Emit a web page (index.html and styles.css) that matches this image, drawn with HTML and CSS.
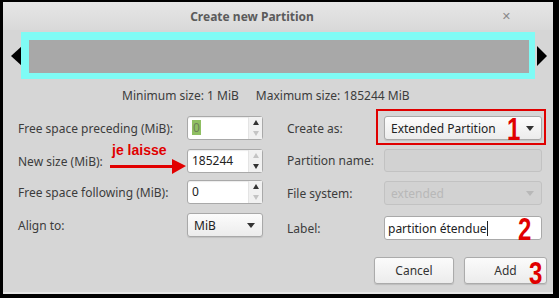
FILE: index.html
```html
<!doctype html>
<html lang="fr">
<head>
	<meta charset="UTF-8">
	<title>Create new Partition</title>
	<link rel="stylesheet" href="styles.css">
</head>
<body>
	<div class="window">
		<div class="titlebar">
			<span class="title">Create new Partition</span>
			<span class="close">&#x2715;</span>
		</div>

		<div class="partbar">
			<span class="arrow left"></span>
			<div class="cyan"><div class="gray"></div></div>
			<span class="arrow right"></span>
		</div>

		<div class="sizes">
			<span>Minimum size: 1 MiB</span>
			<span>Maximum size: 185244 MiB</span>
		</div>

		<div class="form">
			<div class="col col_left">
				<div class="row r1">
					<label>Free space preceding (MiB):</label>
					<div class="spin"><span class="val"><span class="sel">0</span></span><span class="btns"><i class="up"></i><i class="down off"></i></span></div>
				</div>
				<div class="row r2">
					<label>New size (MiB):</label>
					<div class="spin"><span class="val">185244</span><span class="btns"><i class="up off"></i><i class="down"></i></span></div>
				</div>
				<div class="row r3">
					<label>Free space following (MiB):</label>
					<div class="spin"><span class="val">0</span><span class="btns"><i class="up"></i><i class="down off"></i></span></div>
				</div>
				<div class="row r4">
					<label>Align to:</label>
					<div class="combo small"><span>MiB</span><i class="drop"></i></div>
				</div>
				<div class="note">je laisse</div>
				<div class="redarrow"></div>
			</div>

			<div class="col col_right">
				<div class="row q1">
					<label>Create as:</label>
					<div class="combo wide"><span>Extended Partition</span><i class="drop"></i></div>
				</div>
				<div class="row q2">
					<label>Partition name:</label>
					<div class="field off"></div>
				</div>
				<div class="row q3">
					<label>File system:</label>
					<div class="combo wide off"><span>extended</span><i class="drop"></i></div>
				</div>
				<div class="row q4">
					<label>Label:</label>
					<div class="field"><span>partition étendue</span><b class="caret"></b></div>
				</div>
				<div class="buttons">
					<button>Cancel</button>
					<button>Add</button>
				</div>
				<div class="redbox"></div>
				<span class="num n1">1</span>
				<span class="num n2">2</span>
				<span class="num n3">3</span>
			</div>
		</div>
	</div>
</body>
</html>
```

FILE: styles.css
```css
body{margin:0;
     background:#000;
     font-family:"Noto Sans","Open Sans","DejaVu Sans",sans-serif;
     font-size:12px;
     color:#3c3c3c;}

.window{width:550px;
        height:292px;
        margin:2px 0 0 3px;
        background:#d6d6d6;
        position:relative;
        box-sizing:border-box;
        border-bottom:2px solid #e6e6e6;}

.titlebar{height:28px;
          display:flex;
          align-items:center;
          justify-content:center;
          background:linear-gradient(#e6e6e6,#d9d9d9);
          position:relative;}
.title{font-weight:bold;
       color:#5b5b5b;
       margin-left:-52px;}
.close{position:absolute;
       right:42px;
       top:6px;
       font-size:11px;
       color:#8a8a8a;
       font-weight:bold;}

.partbar{display:flex;
         align-items:center;
         height:47px;
         margin-top:2px;
         padding:0 6px 0 8px;}
.cyan{flex:1;
      height:47px;
      margin:0 2px 0 -1px;
      background:#7ffbf5;
      box-sizing:border-box;
      padding:8px 6px 6px 8px;}
.gray{height:100%;
      background:#a8a8a8;}
.arrow{width:0;height:0;
       border-top:10px solid transparent;
       border-bottom:10px solid transparent;}
.arrow.left{border-right:11px solid #000;}
.arrow.right{border-left:10px solid #000;}

.sizes{display:flex;
       gap:17px;
       padding-left:119px;
       margin-top:8px;
       height:18px;
       line-height:18px;}

.form{display:flex;
      margin-top:11px;}
.col{position:relative;}
.col_left{width:266px;
          padding-left:15px;
          box-sizing:border-box;}
.col_right{flex:1;
           padding-left:18px;}

.row{display:flex;
     align-items:center;
     justify-content:space-between;}
.col_left .row{width:245px;}
.col_right .row{width:255px;}
.r2{margin-top:9px;}
.r3{margin-top:7px;}
.r4{margin-top:9px;}
.q2{margin-top:9px;}
.q3{margin-top:9px;}
.q4{margin-top:11px;}

.spin{width:76px;
      height:24px;
      box-sizing:border-box;
      border:1px solid #a9a9a9;
      border-radius:3px;
      background:#fff;
      display:flex;
      box-shadow:inset 0 1px 1px rgba(0,0,0,0.08);}
.val{flex:1;
     padding-left:4px;
     line-height:22px;
     color:#222;}
.sel{background:#8fbf62;
     color:#6d7f5a;
     padding:0 1px;
     display:inline-block;
     line-height:15px;}
.btns{width:13px;
      display:flex;
      flex-direction:column;
      justify-content:space-around;
      align-items:center;
      border-left:1px solid #e4e4e4;
      background:#f1f1f1;}
.btns i{width:0;height:0;
        border-left:3px solid transparent;
        border-right:3px solid transparent;}
.up{border-bottom:5px solid #333;}
.down{border-top:5px solid #333;}
.up.off{border-bottom-color:#c4c4c4;}
.down.off{border-top-color:#c4c4c4;}

.combo{height:24px;
       box-sizing:border-box;
       border:1px solid #a9a9a9;
       border-radius:3px;
       background:linear-gradient(#fcfcfc,#ececec);
       display:flex;
       align-items:center;
       justify-content:space-between;
       padding:0 7px 0 6px;
       color:#222;
       box-shadow:0 1px 1px rgba(0,0,0,0.1);}
.combo.small{width:76px;}
.combo.wide{width:158px;}
.drop{width:0;height:0;
      border-left:4px solid transparent;
      border-right:4px solid transparent;
      border-top:5px solid #333;}
.combo.off{background:#d2d2d2;
           border-color:#c2c2c2;
           color:#b8b8b8;
           box-shadow:none;}
.combo.off .drop{border-top-color:#b8b8b8;}

.field{width:158px;
       height:24px;
       box-sizing:border-box;
       border:1px solid #a9a9a9;
       border-radius:3px;
       background:#fff;
       display:flex;
       align-items:center;
       padding-left:3px;
       color:#222;}
.field.off{background:#d2d2d2;
           border-color:#c2c2c2;
           height:23px;}
.caret{width:1px;
       height:15px;
       background:#222;}

.buttons{display:flex;
         gap:10px;
         margin-top:17px;
         padding-left:87px;}
button{width:80px;
       height:27px;
       font:inherit;
       color:#333;
       border:1px solid #ababab;
       border-radius:3px;
       background:linear-gradient(#fbfbfb,#ececec);
       box-shadow:0 1px 1px rgba(0,0,0,0.12);}
button + button{width:83px;}

.note{position:absolute;
      left:109px;
      top:26px;
      color:#e00000;
      font-weight:bold;
      font-size:14px;
      font-family:"Liberation Sans",Arial,sans-serif;}
.redarrow{position:absolute;
          left:107px;
          top:49px;
          width:62px;
          height:3px;
          background:#e20000;}
.redarrow::after{content:"";
                 position:absolute;
                 right:-14px;
                 top:-6px;
                 border-top:7px solid transparent;
                 border-bottom:8px solid transparent;
                 border-left:14px solid #e20000;}

.redbox{position:absolute;
        left:107px;
        top:-7px;
        width:170px;
        height:36px;
        box-sizing:border-box;
        border:2px solid #e00000;}
.num{position:absolute;
     color:#e00000;
     font-family:"Liberation Sans",Arial,sans-serif;
     font-weight:bold;
     font-size:32px;
     line-height:1;
     transform:scaleX(0.75);
     transform-origin:left top;}
.n1{left:238px;top:-3px;}
.n2{left:249px;top:97px;}
.n3{left:260px;top:141px;}
```
